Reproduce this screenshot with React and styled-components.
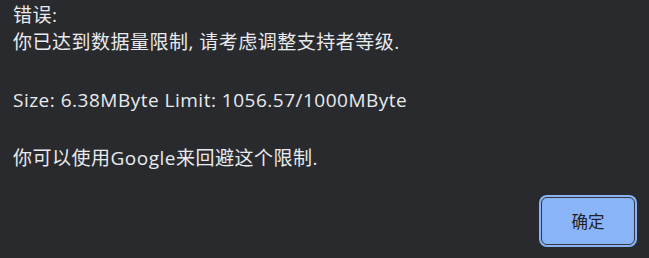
import React from "react";
import styled, { createGlobalStyle } from "styled-components";

const Global = createGlobalStyle`
  html, body { margin: 0; padding: 0; background: #292a2d; }
  body { width: 649px; height: 258px; overflow: hidden; }
`;

const Dialog = styled.div`
  box-sizing: border-box;
  width: 649px;
  height: 258px;
  background: #292a2d;
  color: #e8eaed;
  font-family: "Open Sans", "Noto Sans CJK SC", sans-serif;
  font-size: 19px;
  letter-spacing: 0.5px;
  display: flex;
  flex-direction: column;
  padding: 3px 14px 13px 13px;
`;

const Title = styled.div`
  line-height: 25px;
  height: 25px;
  white-space: nowrap;
`;

const Message = styled.div`
  line-height: 29px;
  white-space: pre-line;
`;

const Footer = styled.div`
  margin-top: auto;
  display: flex;
  justify-content: flex-end;
`;

const Button = styled.button`
  box-sizing: border-box;
  width: 94px;
  height: 48px;
  border: 1px solid #35363a;
  border-radius: 6px;
  background: #8ab4f8;
  color: #202124;
  font-family: "Open Sans", "Noto Sans CJK SC", sans-serif;
  font-size: 16.5px;
  box-shadow: 0 0 0 2px #8ab4f8;
  outline: none;
  cursor: pointer;
  padding: 0;
`;

const lines = [
  "你已达到数据量限制, 请考虑调整支持者等级.",
  "",
  "Size: 6.38MByte Limit: 1056.57/1000MByte",
  "",
  "你可以使用Google来回避这个限制.",
];

export default function App() {
  return (
    <>
      <Global />
      <Dialog>
        <Title>错误:</Title>
        <Message>{lines.join("\n")}</Message>
        <Footer>
          <Button>确定</Button>
        </Footer>
      </Dialog>
    </>
  );
}
